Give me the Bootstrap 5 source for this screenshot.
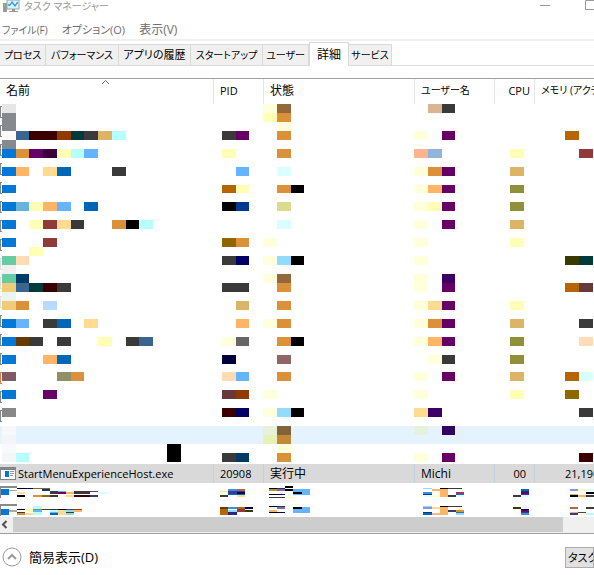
<!DOCTYPE html>
<html lang="ja">
<head>
<meta charset="utf-8">
<meta name="viewport" content="width=device-width, initial-scale=1">
<title>タスク マネージャー</title>
<link href="https://cdn.jsdelivr.net/npm/bootstrap@5.3.0/dist/css/bootstrap.min.css" rel="stylesheet">
<style>
body{font-family:"Open Sans","Noto Sans CJK JP",sans-serif;font-size:12px;line-height:16px;color:#000;background:#fff;font-feature-settings:"palt";overflow:hidden}
button{font-family:inherit;font-feature-settings:inherit}
.f10.f10{font-size:10px}
.f11.f11{font-size:11px}
.f12.f12{font-size:12px}
.titlebar{height:20px;line-height:12px;color:#999;padding-left:3px}
.titlebar h1{line-height:12px}
.win-btn{line-height:0}
.menus{height:19px;padding-left:2px;gap:14px}
.menus button{color:#6d6d6d;line-height:20px}
.menu-line{height:2px;background:#f0f0f0}
.tabs{height:25px;border-bottom:1px solid #dcdcdc}
.tabs button{height:21px;line-height:20px;background:#f0f0f0;border:1px solid #d9d9d9;border-left:0;border-bottom:0;color:#000}
.tabs button.active{height:24px;line-height:22px;background:#fff;margin-bottom:-1px;border-left:1px solid #d9d9d9}
.w-proc{width:46px}.w-perf{width:73px}.w-hist{width:72px}.w-start{width:72px}.w-user{width:46px}.w-det{width:40px}.w-serv{width:43px}
.list-view{border-top:1px solid #a0a0a0;border-bottom:1px solid #a0a0a0;margin-top:12px}
.procs{table-layout:fixed;width:100%;border-collapse:separate;border-spacing:0}
.procs th,.procs td{padding:0;white-space:nowrap;font-weight:400;vertical-align:top}
.procs svg{display:block;overflow:visible}
.procs th{height:25px;line-height:23px;border-right:1px solid #e5e5e5;padding-left:6px}
.procs th:last-child,.procs .picked td:last-child{border-right:0}
.procs .hovered{background:#e5f3ff}
.procs .picked td{height:19px;line-height:19px;background:#d9d9d9;border-right:1px solid #c5d0dc;padding-left:6px}
.procs .picked td:first-child{padding-left:0}
.name-cell{gap:2px}
.c-name{width:214px}.c-pid{width:50px}.c-state{width:151px}.c-user{width:80px}.c-cpu{width:40px}
.sort-arrow{left:101px;top:0}
.scroll-row{height:16px;background:#f0f0f0}
.scroll-row button{width:13px;height:15px}
.thumb{height:15px;background:#cdcdcd;width:95%;margin-right:31px}
.foot{padding:13px 0 0 2px}
.foot .fewer{gap:7px;line-height:20px;font-size:13px}
.end-task{height:21px;width:29px;background:#e1e1e1;border:1px solid #adadad;line-height:19px;overflow:hidden;padding:0 0 0 2px}
</style>
<script src="https://cdn.jsdelivr.net/npm/bootstrap@5.3.0/dist/js/bootstrap.bundle.min.js"></script>
</head>
<body>
<header class="titlebar d-flex align-items-start">
  <svg width="17" height="13" aria-hidden="true">
    <rect x="0" y="3" width="4" height="9" fill="#999"/><rect x="1" y="4" width="1" height="2" fill="#7fca75"/>
    <rect x="4" y="0" width="12" height="9" fill="#d9f1fb" stroke="#9aa4ac" stroke-width="1"/>
    <path d="M5 5h2l2-3 3 4 2-3h1" fill="none" stroke="#2a9bd0" stroke-width="1.3"/>
    <path d="M9 9h3v2h3v1H6v-1h3z" fill="#999"/>
  </svg>
  <h1 class="f10 mb-0 ms-1 fw-normal flex-grow-1">タスク マネージャー</h1>
  <button class="win-btn btn p-0 border-0 rounded-0 me-4" aria-label="最小化"><svg width="21" height="10"><path d="M0 5.500h10" stroke="#999"/></svg></button>
  <button class="win-btn btn p-0 border-0 rounded-0" aria-label="最大化"><svg width="9" height="10"><path d="M9 .5H.5v9H9" fill="none" stroke="#999"/></svg></button>
</header>
<nav class="menus d-flex">
  <button class="f10 btn p-0 border-0">ファイル(F)</button>
  <button class="f11 btn p-0 border-0">オプション(O)</button>
  <button class="f12 btn p-0 border-0">表示(V)</button>
</nav>
<div class="menu-line"></div>
<div class="tabs d-flex align-items-end" role="tablist">
  <button role="tab" class="f10 w-proc p-0 text-nowrap">プロセス</button>
  <button role="tab" class="f10 w-perf p-0 text-nowrap">パフォーマンス</button>
  <button role="tab" class="f11 w-hist p-0 text-nowrap">アプリの履歴</button>
  <button role="tab" class="f10 w-start p-0 text-nowrap">スタートアップ</button>
  <button role="tab" class="f10 w-user p-0 text-nowrap">ユーザー</button>
  <button role="tab" class="f12 w-det p-0 text-nowrap active" aria-selected="true">詳細</button>
  <button role="tab" class="f10 w-serv p-0 text-nowrap">サービス</button>
</div>
<main class="list-view overflow-hidden">
  <table class="procs">
    <thead>
      <tr>
        <th class="c-name position-relative">名前<svg class="sort-arrow position-absolute" width="9" height="6"><path d="M1 5l3.500-3.500L8 5" fill="none" stroke="#666"/></svg></th>
        <th class="c-pid f11">PID</th><th class="c-state">状態</th><th class="c-user f10">ユーザー名</th>
        <th class="c-cpu f11 text-end pe-1">CPU</th><th class="f10">メモリ (アクティブ)</th>
      </tr>
    </thead>
    <tbody id="censored"></tbody>
    <tbody>
      <tr class="picked">
        <td class="f11"><div class="name-cell d-flex align-items-center"><svg width="16" height="13" aria-hidden="true"><rect x="0" y="0" width="16" height="13" fill="#80868b"/><rect x="1" y="3" width="14" height="9" fill="#fff"/><rect x="5" y="4" width="4" height="6" fill="#0078d7"/><path d="M10 4.500h4M10 6.500h4M10 8.500h3" stroke="#999"/></svg><span>StartMenuExperienceHost.exe</span></div></td>
        <td class="f11">20908</td><td>実行中</td><td>Michi</td><td class="f11 text-end pe-2">00</td><td class="f11"><div class="ps-4">21,196 K</div></td>
      </tr>
    </tbody>
    <tbody id="tail"></tbody>
  </table>
  <div class="scroll-row d-flex">
    <button class="border-0 p-0 bg-transparent flex-shrink-0" aria-label="左へスクロール"><svg class="d-block" width="13" height="15"><path d="M6.500 4L3 7.500 6.500 11" fill="none" stroke="#505050" stroke-width="2"/></svg></button>
    <div class="thumb"></div>
  </div>
</main>
<footer class="foot d-flex align-items-start justify-content-between">
  <button class="fewer btn p-0 border-0 d-flex align-items-center text-black" id="fewer"><svg width="20" height="20" aria-hidden="true"><circle cx="10" cy="10" r="9" fill="#fff" stroke="#999"/><path d="M6 12l4-4 4 4" fill="none" stroke="#999" stroke-width="2"/></svg><span>簡易表示(D)</span></button>
  <button class="end-task f11 text-nowrap text-start">タスクの終了(E)</button>
</footer>
<script>
// Column left edges; every block sits on a shared grid, t = upper band, b = lower band of a row.
const starts = [0, 214, 264, 415, 495, 535];
const pal = {B:'0078d7',O:'db9139',P:'660066',K:'000',G:'3a3a3a',Y:'ffffdb',y:'ffffb6',A:'ffb466',a:'ffdb90',S:'66b4ff',D:'0066b6',T:'dbb465',V:'90903a',C:'b6ffff',c:'dbffff',M:'94683c',g:'858a8e',R:'903a3a',W:'b66600',p:'ffdbb6',L:'90dbff',N:'000066',U:'3a6590',r:'3a0000',t:'003a3a'};
const rows = [
'0t:e6e6e6 0b:g 19t:Y 20t:M 19b:y 20b:O 31t:dbb491 32t:G',
'0t:g 0b:fafafa 1b:U 2b:r 3b:r 4b:903a00 5b:t 6b:G 7b:T 8b:C 16b:G 17b:P 20t:Y 20b:O 30b:Y 32b:P 41b:W',
'0t:g 0b:B 1b:O 2b:P 3b:3a003a 4b:y 5b:C 6b:S 16b:y 20b:O 30b:ffb490 31b:90b4db 37b:y 42b:R',
'0b:B 1b:A 3b:a 4b:D 8b:G 17b:S 20b:c 30b:Y 31b:O 32b:P 37b:T',
'0b:B 16b:W 17b:y 20b:O 21b:K 30b:Y 31b:A 32b:P 37b:V',
'0b:B 1b:66b4db 2b:y 3b:A 4b:S 6b:D 16b:K 17b:003a90 20b:dbdb90 30b:Y 31b:y 32b:P 37b:V',
'0b:B 2b:y 3b:R 4b:a 5b:G 8b:O 9b:K 10b:C 20b:c 30b:Y 32b:P 37b:T',
'0b:B 3b:R 16b:906600 17b:O 19b:Y 30b:Y 37b:y',
'2t:y 0b:66cca3 1b:p 16b:G 17b:N 19b:Y 20b:L 21b:K 30b:Y 41b:3a3a00 42b:t',
'0t:f0f0f0 0b:66cca3 1b:003a66 19b:Y 20b:M 30b:Y 32b:3a0066',
'0t:f0cc78 1t:U 2t:t 3t:r 4t:G 0b:eaf4f0 16t:G 17t:G 20t:O 30t:Y 32t:P 41t:W 42t:663a3a',
'0t:f0cc78 1t:O 3t:b6dbff 17t:T 20t:O 30t:Y 31t:a 32t:P 37t:y',
'0t:B 1t:S 3t:G 4t:D 6t:a 17t:A 19t:Y 20t:O 30t:Y 31t:O 32t:P 37t:T 42t:G',
'0t:B 1t:663a00 2t:G 4t:G 7t:y 9t:G 10t:U 16t:Y 17t:666666 20t:O 21t:K 30t:Y 31t:A 32t:P 37t:V 42t:p',
'0t:B 3t:A 4t:D 16t:00003a 20t:906666 31t:Y 32t:G 37t:V',
'0t:805a65 4t:909066 5t:O 16t:p 17t:S 20t:O 30t:Y 32t:P 37t:T 41t:W 42t:c',
'0t:B 3t:P 16t:663a3a 17t:903a00 19t:Y 30t:Y 37t:y 41t:906600',
'0t:888888 16t:r 17t:N 19t:Y 20t:L 21t:K 30t:a 31t:3a0066 42t:G',
'0t:f8f8fa 0b:f4f5f8 19t:e5f1db 20t:83623a 19b:e5f3b6 20b:c48839 30t:e5f1db 32t:330063',
'0t:f8f9fa 0b:f5f7f6 1b:C 12t:K 12b:K 16b:G 17b:003a66 20t:Y 20b:O 30b:Y 32b:P 42b:r'];
// Finer blocks of the last two rows: x y width height colour.
const fine = [
'0 3 17 2 g,0 3 1 12 g,1 6 8 6 B,9 7 8 1 aaaaaa,17 5 8 1 K,25 5 8 1 N,33 5 17 1 906600,42 6 8 2 003a90,17 9 8 2 p,50 8 8 3 G,58 8 8 1 S,58 9 8 2 P,66 9 8 2 A,74 8 16 3 G,90 8 8 1 663a66,98 9 9 2 c,17 12 8 2 K,33 12 9 2 O,42 12 8 2 906600,50 12 8 2 G,58 12 8 2 Y,66 12 8 2 a,74 12 16 2 r,90 12 8 2 3a3a66,'+
'220 6 8 2 Y,228 6 9 2 3a90db,237 6 8 2 b66639,220 8 8 1 p,220 9 8 3 Y,228 8 9 3 3a3a90,237 8 8 1 3a3a90,237 9 8 2 N,228 11 17 1 D,220 12 8 2 G,237 12 8 2 a,'+
'269 5 8 1 K,277 5 8 1 003a90,285 3 8 2 K,269 6 8 2 b69139,277 6 8 2 906690,285 6 8 2 K,293 6 17 6 S,293 9 9 2 K,269 11 8 1 K,277 11 8 1 N,269 14 16 1 G,285 14 8 1 y,'+
'423 5 9 1 L,432 6 8 2 A,440 5 8 9 A,440 5 8 1 K,448 5 14 1 G,423 9 9 2 3a90db,423 11 9 1 003a90,423 12 9 2 c,432 12 8 2 Y,448 12 8 2 G,456 9 8 2 903a66,456 11 8 1 3a66b6,456 12 8 2 c,'+
'513 12 8 2 G,521 6 8 2 D,521 8 8 1 003a90,521 9 8 2 P,521 11 8 1 3a3a90,521 12 8 2 c,570 6 8 2 9090db,578 6 8 2 y,586 6 8 2 c,570 11 8 1 T,570 12 8 2 K,578 12 8 2 A,586 9 8 2 K,586 12 8 2 G',
'0 3 17 2 g,0 3 1 12 g,1 8 8 6 B,9 9 8 2 aaaaaa,17 8 8 1 K,25 8 8 3 y,33 5 9 3 C,33 8 9 1 909066,33 9 9 2 S,42 8 16 1 G,50 9 8 2 C,58 8 8 1 K,58 9 8 2 a,66 8 8 1 3a3a90,66 9 8 2 90dbdb,74 8 8 1 903a3a,74 9 8 2 A,17 11 8 1 G,17 12 8 2 O,25 12 8 2 a,33 11 9 3 C,50 11 8 1 S,50 12 8 2 D,58 11 8 3 a,66 11 8 1 G,66 12 8 2 90dbdb,'+
'220 6 8 2 663a00,228 6 9 2 3a90db,237 6 8 2 W,245 6 8 2 00003a,220 8 8 6 W,228 9 9 2 L,237 8 8 3 R,245 9 8 2 3a3a00,228 11 9 1 P,228 12 9 2 003a90,'+
'269 5 8 1 K,277 5 8 1 003a90,269 6 8 2 c,277 6 8 2 906690,293 6 17 6 S,293 6 9 2 K,269 9 8 2 A,269 11 8 1 K,277 11 8 1 N,'+
'423 5 9 1 L,423 6 9 2 9090db,432 6 8 2 a,440 5 8 9 A,440 5 8 1 K,448 5 14 1 G,448 9 8 2 3a3a66,456 8 8 1 y,456 9 8 2 O,423 11 9 1 003a90,423 12 9 2 D,432 12 8 2 ffb490,456 11 8 1 3a66b6,456 12 8 2 L,'+
'513 6 8 2 3a3a00,521 6 8 2 c,521 8 8 1 N,521 9 8 2 P,521 11 8 1 3a3a90,521 12 8 2 3a90db,570 6 8 2 b66639,586 6 8 2 G,570 11 8 1 T,570 12 8 2 3a3a90,578 11 8 1 663a3a,586 12 8 2 C'];
const edge = n => Math.round(1.9 + 13.745 * n);
const rect = (x, y, w, h, c) => `<rect x="${x}" y="${y}" width="${w}" height="${h}" fill="#${pal[c] || c}"/>`;
const line = (blocks, height, cls = '', extra = '') => {
  const cells = starts.map(() => '');
  blocks.forEach(([x, y, w, h, c]) => {
    let i = 5;
    while (i && x < starts[i] - 1) i--;
    cells[i] += rect(x - starts[i], y, w, h, c);
  });
  cells[0] = extra + cells[0];
  return `<tr class="${cls}">` + cells.map(s => `<td><svg width="40" height="${height}" aria-hidden="true">${s}</svg></td>`).join('') + '</tr>';
};
let brackets = '';
for (let k = 0; k < 17; k++) {
  const c = k === 14 ? 'e08040' : (k > 7 && k < 11 ? 'e0e0e0' : 'g');
  brackets += rect(0, 2 + 19 * k, 1, 12, c) + rect(1, 2 + 19 * k, 1, 1, c) + rect(1, 13 + 19 * k, 1, 1, c);
}
document.getElementById('censored').innerHTML = rows.map((r, i) => {
  const height = i === 4 || i === 14 ? 17 : i === 19 ? 20 : 18;
  const blocks = r.split(' ').map(s => {
    const [, n, b, c] = s.match(/^(\d+)([tb]):(.+)$/);
    return [edge(+n), b === 't' ? 0 : 9, edge(+n + 1) - edge(+n), height === 17 && b === 'b' ? 8 : 9, c];
  });
  return line(blocks, height, i === 18 ? 'hovered' : '', i ? '' : brackets);
}).join('');
document.getElementById('tail').innerHTML = fine.map((r, i) => line(r.split(',').map(s => {
  const p = s.split(' ');
  return [+p[0], +p[1], +p[2], +p[3], p[4]];
}), i ? 16 : 18)).join('');
</script>
</body>
</html>
